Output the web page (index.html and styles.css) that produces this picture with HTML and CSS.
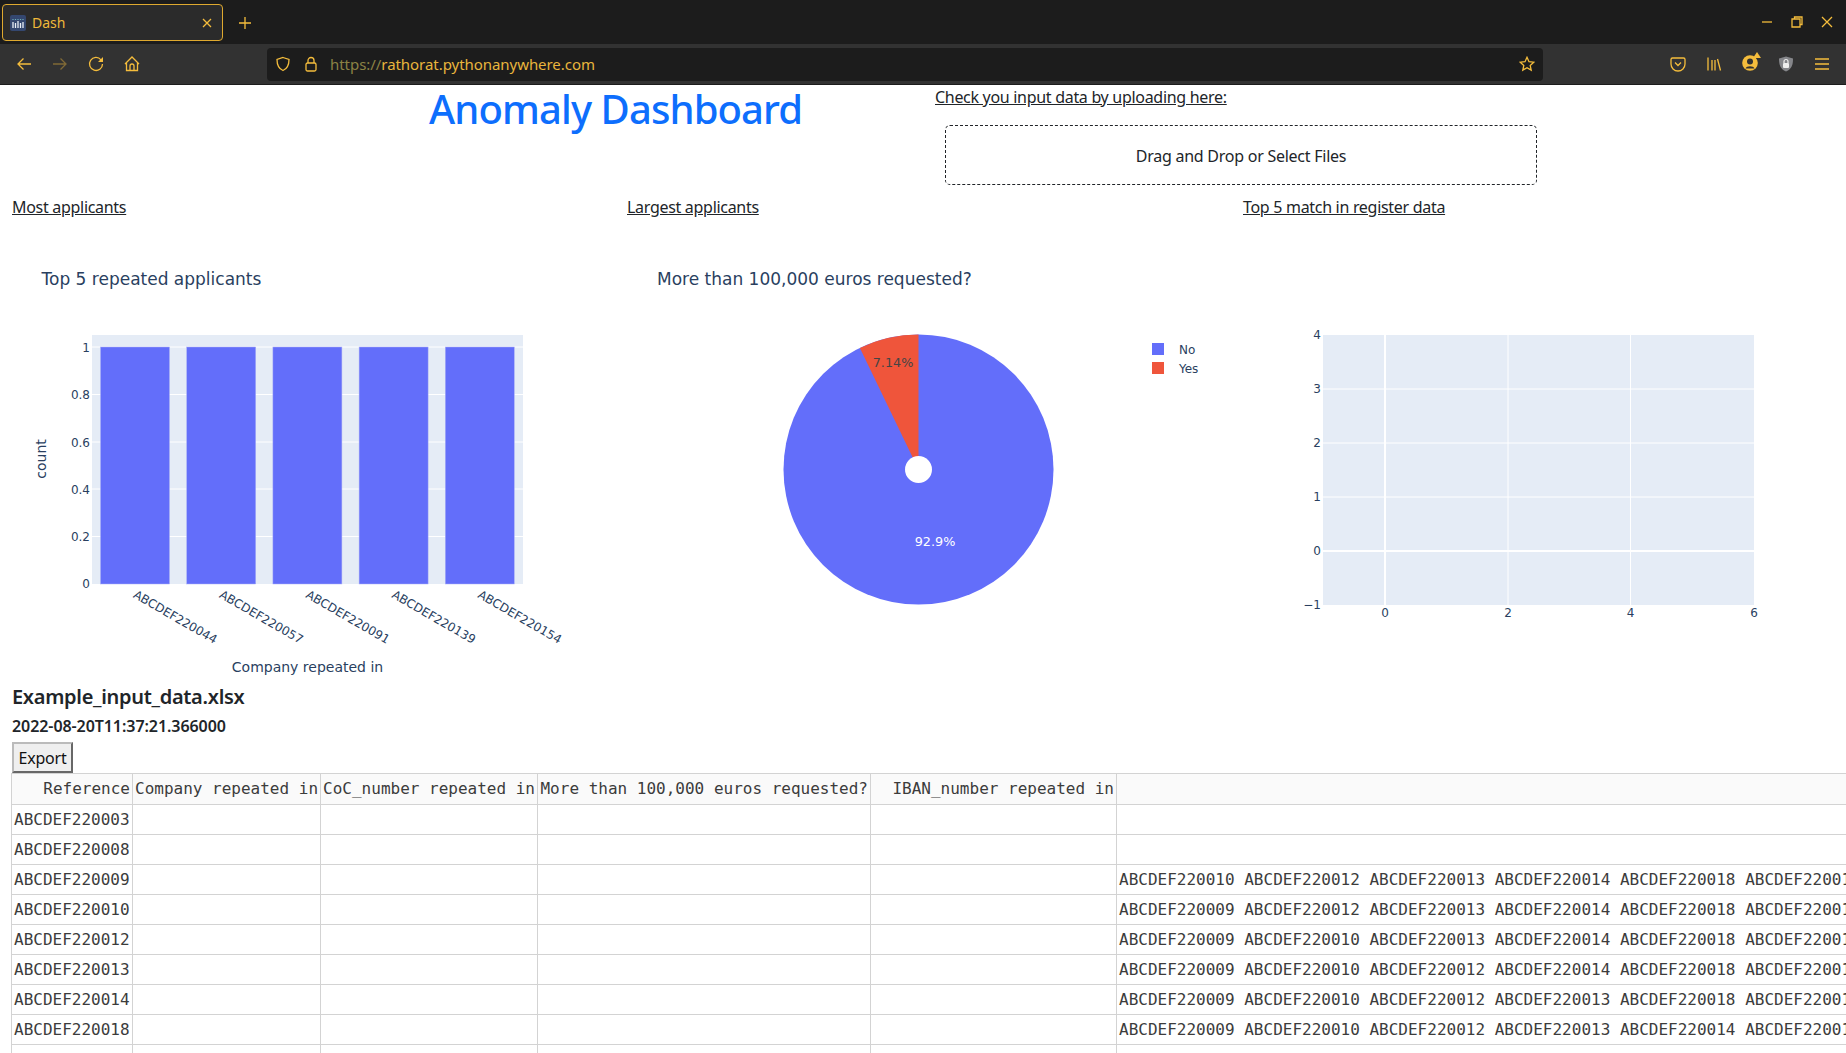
FILE: index.html
```html
<!DOCTYPE html>
<html lang="en">
<head>
<meta charset="utf-8">
<title>Dash</title>
<link rel="stylesheet" href="styles.css">
</head>
<body>
<header class="chrome">
  <div class="tabbar">
    <div class="tab">
      <svg class="favicon" width="16" height="16" viewBox="0 0 16 16"><rect width="16" height="16" rx="2" fill="#34476f"/><path d="M3 4v1M5.500 4v1M8 4v1M10.500 4v1M13 4v1" stroke="#6fb0b8" stroke-width="1.200"/><path d="M3 7v6M5.500 8v5M8 6v7M10.500 8v5M13 7v6" stroke="#e8eef6" stroke-width="1.300"/></svg>
      <span class="tabtitle">Dash</span>
      <svg class="tabclose" width="10" height="10" viewBox="0 0 10 10"><path d="M1 1l8 8M9 1l-8 8" class="ln"/></svg>
    </div>
    <svg class="newtab" width="14" height="14" viewBox="0 0 14 14"><path d="M7 1v12M1 7h12" class="ln"/></svg>
    <div class="winbtns">
      <svg width="12" height="12" viewBox="0 0 12 12"><path d="M1 6h10" class="ln"/></svg>
      <svg width="12" height="12" viewBox="0 0 12 12"><path d="M3.500 2.500V1h7.500v7.500H9M1 3h8v8H1z" class="ln"/></svg>
      <svg width="12" height="12" viewBox="0 0 12 12"><path d="M1 1l10 10M11 1L1 11" class="ln"/></svg>
    </div>
  </div>
  <div class="toolbar">
    <svg class="ic" viewBox="0 0 16 16"><path d="M15 8H2M7.500 2.500L2 8l5.500 5.500" class="ln"/></svg>
    <svg class="ic dim" viewBox="0 0 16 16"><path d="M1 8h13M8.500 2.500L14 8l-5.500 5.500" class="ln"/></svg>
    <svg class="ic" viewBox="0 0 16 16"><path d="M13 3.800A6.500 6.500 0 1 0 14.500 8" class="ln"/><path d="M15 1v5h-5z" class="fl"/></svg>
    <svg class="ic" viewBox="0 0 16 16"><path d="M1 8l7-7 7 7M2.500 7v7.500h11V7M6 14.500V10a2 2 0 0 1 4 0v4.500" class="ln"/></svg>
    <div class="urlbar">
      <svg class="ic" viewBox="0 0 16 16"><path d="M8 1.500l6 2c0 5-1 9-6 11-5-2-6-6-6-11z" class="ln"/></svg>
      <svg class="ic" viewBox="0 0 16 16"><rect x="3" y="7" width="10" height="8" rx="1.500" class="ln"/><path d="M5 7V4.500a3 3 0 0 1 6 0V7" class="ln"/></svg>
      <span class="url"><span class="urldim">https://</span>rathorat.pythonanywhere.com</span>
      <svg class="ic star" viewBox="0 0 16 16"><path d="M8 1.300l2 4.400 4.800.5-3.600 3.200 1 4.700L8 11.700l-4.200 2.400 1-4.700L1.200 6.200 6 5.700z" class="ln"/></svg>
    </div>
    <svg class="ic pocket" viewBox="0 0 16 16"><path d="M2.500 2h11A1.500 1.500 0 0 1 15 3.500V8a7 7 0 0 1-14 0V3.500A1.500 1.500 0 0 1 2.500 2z" class="ln"/><path d="M5 6.500l3 3 3-3" class="ln"/></svg>
    <svg class="ic" viewBox="0 0 16 16"><path d="M2 1.500v13M6 4v10.500M9 4v10.500M11.500 3l3 11.500" class="ln"/></svg>
    <svg class="acct" viewBox="0 0 20 20"><circle cx="8" cy="11" r="7.800" class="fl"/><circle cx="8" cy="9.500" r="3" fill="#323232"/><path d="M3.500 16.500c1-3 8-3 9 0z" fill="#323232"/><path d="M15 0l4 6h-8z" class="fl"/></svg>
    <svg class="ic" viewBox="0 0 16 16"><path d="M8 .5l7 2c0 6-1 10.500-7 13-6-2.500-7-7-7-13z" fill="#85868a"/><rect x="5" y="7" width="6" height="5" rx="1" fill="#eee"/><path d="M6 7V5.500a2 2 0 0 1 4 0V7" fill="none" stroke="#eee" stroke-width="1.200"/></svg>
    <svg class="ic" viewBox="0 0 16 16"><path d="M1 3h14M1 8h14M1 13h14" class="ln"/></svg>
  </div>
</header>

<main class="page">
  <section class="toprow">
    <div class="titlecol"><h1 class="title">Anomaly Dashboard</h1></div>
    <div class="uploadcol">
      <a class="link">Check you input data by uploading here:</a>
      <div class="drop">Drag and Drop or Select Files</div>
    </div>
  </section>

  <section class="cols linkrow">
    <div><a class="link">Most applicants</a></div>
    <div><a class="link">Largest applicants</a></div>
    <div><a class="link">Top 5 match in register data</a></div>
  </section>

  <section class="cols charts">
    <svg class="chart" width="615" height="445" viewBox="0 0 615 445">
      <text class="ctitle" x="41.500" y="50">Top 5 repeated applicants</text>
      <rect class="plot" x="92" y="100" width="431" height="249"/>
      <path class="grid" d="M92 112h431M92 159.500h431M92 207h431M92 254h431M92 301.500h431"/>
      <rect class="bar" x="100.500" y="112" width="69" height="237"/>
      <rect class="bar" x="186.700" y="112" width="69" height="237"/>
      <rect class="bar" x="272.900" y="112" width="69" height="237"/>
      <rect class="bar" x="359.100" y="112" width="69" height="237"/>
      <rect class="bar" x="445.300" y="112" width="69" height="237"/>
      <text class="tk end" x="90" y="117">1</text>
      <text class="tk end" x="90" y="164">0.8</text>
      <text class="tk end" x="90" y="212">0.6</text>
      <text class="tk end" x="90" y="259">0.4</text>
      <text class="tk end" x="90" y="306">0.2</text>
      <text class="tk end" x="90" y="353">0</text>
      <text class="tk" transform="translate(132.500 362) rotate(30)">ABCDEF220044</text>
      <text class="tk" transform="translate(218.500 362) rotate(30)">ABCDEF220057</text>
      <text class="tk" transform="translate(305 362) rotate(30)">ABCDEF220091</text>
      <text class="tk" transform="translate(391 362) rotate(30)">ABCDEF220139</text>
      <text class="tk" transform="translate(477 362) rotate(30)">ABCDEF220154</text>
      <text class="axt mid" x="307.500" y="437">Company repeated in</text>
      <text class="axt mid" transform="translate(46 224) rotate(-90)">count</text>
    </svg>

    <svg class="chart" width="616" height="445" viewBox="0 0 616 445">
      <text class="ctitle" x="42" y="50">More than 100,000 euros requested?</text>
      <circle class="pie" cx="303.500" cy="234.500" r="135"/>
      <path class="wedge" d="M303.500 234.500V99.500A135 135 0 0 0 244.900 112.900z"/>
      <circle class="hole" cx="303.500" cy="234.500" r="13.500"/>
      <text class="pct dark mid" x="278" y="132">7.14%</text>
      <text class="pct light mid" x="320" y="311">92.9%</text>
      <rect class="pie" x="537" y="108" width="12" height="12"/>
      <rect class="wedge" x="537" y="127" width="12" height="12"/>
      <text class="tk" x="564" y="119">No</text>
      <text class="tk" x="564" y="138">Yes</text>
    </svg>

    <svg class="chart" width="615" height="445" viewBox="0 0 615 445">
      <rect class="plot" x="92" y="100" width="431" height="270"/>
      <path class="grid" d="M92 154h431M92 208h431M92 262h431M277 100v270M399.500 100v270"/>
      <path class="zero" d="M92 316h431M154 100v270"/>
      <text class="tk end" x="90" y="104">4</text>
      <text class="tk end" x="90" y="158">3</text>
      <text class="tk end" x="90" y="212">2</text>
      <text class="tk end" x="90" y="266">1</text>
      <text class="tk end" x="90" y="320">0</text>
      <text class="tk end" x="90" y="374">−1</text>
      <text class="tk mid" x="154" y="382">0</text>
      <text class="tk mid" x="277" y="382">2</text>
      <text class="tk mid" x="399.500" y="382">4</text>
      <text class="tk mid" x="523" y="382">6</text>
    </svg>
  </section>

  <section class="data">
    <h5 class="fname">Example_input_data.xlsx</h5>
    <h6 class="stamp">2022-08-20T11:37:21.366000</h6>
    <button class="export">Export</button>
    <table class="tbl">
      <colgroup>
        <col class="c1"><col class="c2"><col class="c3"><col class="c4"><col class="c5"><col class="c6">
      </colgroup>
      <thead>
        <tr><th>Reference</th><th>Company repeated in</th><th>CoC_number repeated in</th><th>More than 100,000 euros requested?</th><th>IBAN_number repeated in</th><th></th></tr>
      </thead>
      <tbody>
        <tr><td>ABCDEF220003</td><td></td><td></td><td></td><td></td><td></td></tr>
        <tr><td>ABCDEF220008</td><td></td><td></td><td></td><td></td><td></td></tr>
        <tr><td>ABCDEF220009</td><td></td><td></td><td></td><td></td><td>ABCDEF220010 ABCDEF220012 ABCDEF220013 ABCDEF220014 ABCDEF220018 ABCDEF220019</td></tr>
        <tr><td>ABCDEF220010</td><td></td><td></td><td></td><td></td><td>ABCDEF220009 ABCDEF220012 ABCDEF220013 ABCDEF220014 ABCDEF220018 ABCDEF220019</td></tr>
        <tr><td>ABCDEF220012</td><td></td><td></td><td></td><td></td><td>ABCDEF220009 ABCDEF220010 ABCDEF220013 ABCDEF220014 ABCDEF220018 ABCDEF220019</td></tr>
        <tr><td>ABCDEF220013</td><td></td><td></td><td></td><td></td><td>ABCDEF220009 ABCDEF220010 ABCDEF220012 ABCDEF220014 ABCDEF220018 ABCDEF220019</td></tr>
        <tr><td>ABCDEF220014</td><td></td><td></td><td></td><td></td><td>ABCDEF220009 ABCDEF220010 ABCDEF220012 ABCDEF220013 ABCDEF220018 ABCDEF220019</td></tr>
        <tr><td>ABCDEF220018</td><td></td><td></td><td></td><td></td><td>ABCDEF220009 ABCDEF220010 ABCDEF220012 ABCDEF220013 ABCDEF220014 ABCDEF220019</td></tr>
        <tr><td></td><td></td><td></td><td></td><td></td><td></td></tr>
      </tbody>
    </table>
  </section>
</main>
</body>
</html>
```
FILE: styles.css
```css
* { box-sizing: border-box; }
html, body { margin: 0; padding: 0; height: 1053px; overflow: hidden; background: #fff; }
body { font-family: "Noto Sans", sans-serif; font-size: 16px; color: #212529; width: 1846px; }

/* browser chrome */
.chrome { background: #323232; height: 85px; border-bottom: 1px solid #1c1c1c; }
.tabbar { height: 44px; background: #1c1c1c; display: flex; align-items: flex-start; padding: 4px 0 0 2px; }
.tab { width: 221px; height: 37px; background: #2b2b2b; border: 1px solid #dfa92f; border-radius: 4px; display: flex; align-items: center; padding: 0 10px 0 7px; color: #f0b93a; font-size: 14px; }
.favicon { flex: none; }
.tabtitle { margin-left: 6px; flex: 1; }
.newtab { margin: 12px 0 0 15px; }
.winbtns { margin-left: auto; display: flex; gap: 18px; padding: 12px 13px 0 0; }
.ln { fill: none; stroke: #f5bd3c; stroke-width: 1.3; }
.fl { fill: #f5bd3c; }
.toolbar { height: 40px; display: flex; align-items: center; gap: 20px; padding-left: 16px; }
.ic { width: 16px; height: 16px; flex: none; }
.dim { opacity: .4; }
.urlbar { width: 1276px; height: 33px; margin-left: 107px; margin-right: 107px; background: #1c1c1c; border-radius: 4px; display: flex; align-items: center; gap: 12px; padding: 0 8px; color: #e9b53c; font-size: 15px; }
.url { flex: 1; margin-left: -1px; letter-spacing: -.05px; }
.urldim { color: #8b8244; }
.acct { width: 20px; height: 20px; flex: none; margin: 0 -4px 4px 0; }

/* page */
.page { background: #fff; }
.toprow { display: flex; height: 110px; }
.titlecol { width: 923px; padding-left: 429px; }
.title { margin: 0; font-size: 40px; line-height: 48px; font-weight: 500; letter-spacing: -.9px; color: #0d6efd; white-space: nowrap; }
.uploadcol { padding: 0 0 0 12px; }
.link { text-decoration: underline; color: #212529; white-space: nowrap; line-height: 24px; letter-spacing: -.3px; }
.drop { width: 592px; height: 60px; margin: 16px 0 0 10px; padding-top: 2px; border: 1px dashed #212529; border-radius: 5px; display: flex; align-items: center; justify-content: center; letter-spacing: -.25px; }
.cols { display: grid; grid-template-columns: 615px 616px 615px; }
.linkrow { height: 40px; }
.linkrow > div { padding-left: 12px; }
.chart { display: block; }

/* plotly */
.chart text { font-family: "DejaVu Sans", sans-serif; fill: #2a3f5f; }
.chart .ctitle { font-size: 17px; }
.chart .tk { font-size: 12px; }
.chart .axt { font-size: 14px; }
.chart .pct { font-size: 12.8px; }
.chart .dark { fill: #444; }
.chart .light { fill: #fff; }
.end { text-anchor: end; }
.mid { text-anchor: middle; }
.plot { fill: #e5ecf6; }
.grid { fill: none; stroke: #fff; stroke-width: 1; }
.zero { fill: none; stroke: #fff; stroke-width: 2; }
.bar { fill: #636efa; stroke: #aab0f5; stroke-width: .5; }
.pie { fill: #636efa; }
.wedge { fill: #ef553b; }
.hole { fill: #fff; }

/* table */
.data { padding: 5px 0 0 12px; }
.fname { margin: 0; font-size: 20px; line-height: 24px; font-weight: 600; letter-spacing: -.3px; }
.stamp { margin: 5px 0 0; font-size: 16px; line-height: 24px; font-weight: 600; letter-spacing: -.07px; }
.export { display: block; margin: 4px 0 0; width: 61px; height: 31px; padding: 0; font: inherit; letter-spacing: -.2px; color: #111; background: #efefef; border: 2px outset #bbb; }
.tbl { border-collapse: collapse; table-layout: fixed; width: 3000px; margin-left: -1px; font-family: "DejaVu Sans Mono", monospace; font-size: 16px; color: #3c3c3c; }
.c1 { width: 121px; } .c2 { width: 188px; } .c3 { width: 217px; } .c4 { width: 333px; } .c5 { width: 246px; } .c6 { width: 1895px; }
.tbl th, .tbl td { height: 30px; padding: 2px; border: 1px solid #d3d3d3; white-space: nowrap; overflow: hidden; font-weight: 400; line-height: 20px; }
.tbl th { height: 31px; background: #fafafa; text-align: right; }
.tbl td { text-align: left; }
```
